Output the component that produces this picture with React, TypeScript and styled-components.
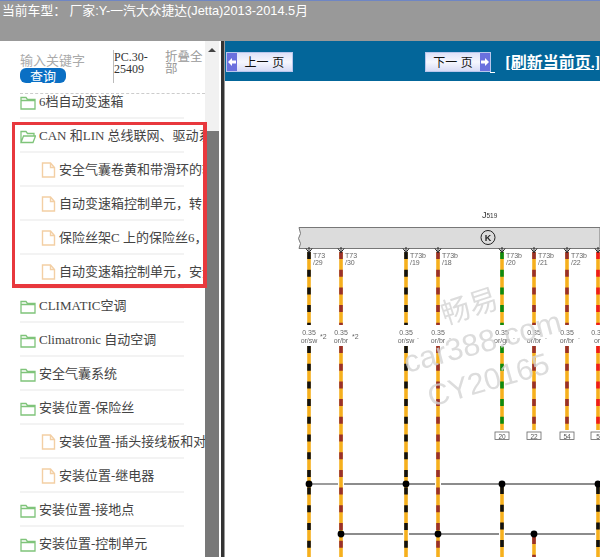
import React from 'react';
import styled, { createGlobalStyle } from 'styled-components';

const GlobalStyle = createGlobalStyle`
  html, body {
    margin: 0;
    padding: 0;
    background: #fff;
    overflow: hidden;
  }
  *, *::before, *::after {
    box-sizing: border-box;
  }
`;

const Page = styled.div`
  width: 600px;
  height: 557px;
  display: flex;
  flex-direction: column;
  overflow: hidden;
  font-family: "Liberation Serif", "Noto Sans CJK SC", serif;
`;

const TopBar = styled.div`
  height: 41px;
  flex: none;
  background: #999;
  border-top: 1px solid #6f86c4;
  padding: 1px 0 0 2px;
  color: #fff;
  font-family: "Liberation Sans", "Noto Sans CJK SC", sans-serif;
  font-size: 12.8px;
  line-height: 17px;
  white-space: nowrap;
`;

const Body = styled.div`
  flex: 1;
  display: flex;
  min-height: 0;
`;

const Sidebar = styled.div`
  width: 205px;
  flex: none;
  position: relative;
  z-index: 1;
  background: #fff;
`;

const SearchBox = styled.div`
  height: 53px;
  margin: 0 0 -9px 20px;
  display: flex;
  border-bottom: 1px dashed #ccc;
  padding-top: 9px;
`;

const SearchField = styled.div`
  width: 93px;
  display: flex;
  flex-direction: column;
  align-items: flex-start;
`;

const Placeholder = styled.div`
  font-family: "Noto Sans CJK SC", sans-serif;
  font-size: 13px;
  line-height: 15px;
  margin: 2px 0 1px;
  color: #aaa;
`;

const SearchButton = styled.div`
  width: 46px;
  height: 15px;
  background: #0a6fc4;
  border-radius: 6px;
  color: #fff;
  font-family: "Noto Sans CJK SC", sans-serif;
  font-size: 13px;
  line-height: 15px;
  text-align: center;
`;

const CodeLabel = styled.div`
  width: 52px;
  height: 33px;
  padding: 1px 14px 0 0;
  border-left: 1px solid #bbb;
  color: #333;
  font-size: 12px;
  line-height: 12px;
  word-break: break-all;
`;

const CollapseLabel = styled.div`
  width: 38px;
  font-family: "Noto Sans CJK SC", sans-serif;
  font-size: 12.5px;
  line-height: 12px;
  color: #999;
`;

const TreeGroup = styled.div<{ $marked?: boolean }>`
  position: relative;
  ${p => p.$marked && `
    &::after {
      content: '';
      position: absolute;
      left: 12px;
      top: 3px;
      width: 195px;
      height: 166px;
      border: 3px solid #e8383d;
      border-right-width: 4px;
      border-bottom-width: 4px;
    }
  `}
`;

const TreeRow = styled.div<{ $file?: boolean }>`
  height: 34px;
  margin-left: 20px;
  width: 185px;
  padding-left: ${p => (p.$file ? '21px' : '0')};
  display: flex;
  align-items: center;
  gap: 3px;
  overflow: hidden;
  background: linear-gradient(#f3f3f3, #f3f3f3) left bottom / 164px 2px no-repeat;
  white-space: nowrap;
  svg {
    flex: none;
  }
`;

const TreeText = styled.span`
  font-family: "Liberation Serif", "Noto Sans CJK SC", serif;
  font-size: 13px;
  line-height: 16px;
  color: #444;
`;

const ScrollBar = styled.div`
  width: 14px;
  flex: none;
  display: flex;
  flex-direction: column;
  background: #f1f1f1;
`;

const ScrollTrack = styled.div`
  height: 90px;
  flex: none;
  display: flex;
  justify-content: center;
  padding-top: 7px;
`;

const ScrollArrow = styled.div`
  width: 0;
  height: 0;
  border-left: 4px solid transparent;
  border-right: 4px solid transparent;
  border-bottom: 4px solid #444;
`;

const ScrollThumb = styled.div`
  flex: 1;
  background: #787878;
`;

const Splitter = styled.div`
  width: 6px;
  flex: none;
  background: #fff;
  display: flex;
  justify-content: flex-end;
`;

const SplitLine = styled.div`
  width: 4px;
  background: #333;
  border-right: 1px solid #999;
`;

const Main = styled.div`
  flex: 1;
  min-width: 0;
  display: flex;
  flex-direction: column;
  overflow: hidden;
`;

const PageBar = styled.div`
  height: 40px;
  flex: none;
  background: #03669a;
  display: flex;
  align-items: center;
  padding: 0 0 0 1px;
  white-space: nowrap;
`;

const PageButton = styled.div<{ $next?: boolean }>`
  position: relative;
  width: 68px;
  height: 20px;
  margin-top: 1px;
  margin-left: ${p => (p.$next ? '132px' : '0')};
  display: flex;
  flex-direction: ${p => (p.$next ? 'row-reverse' : 'row')};
  border: 1px solid #b9c6ec;
  background: linear-gradient(#dfe2f9, #f6f7fe 50%, #d8dcf6);
  font-family: "Noto Sans CJK SC", sans-serif;
  font-size: 12px;
  line-height: 17px;
  color: #111;
  ${p => p.$next && `
    &::after {
      content: '';
      position: absolute;
      left: 100%;
      bottom: -2px;
      width: 5px;
      height: 1px;
      background: #fff;
    }
  `}
`;

const PageArrow = styled.div`
  width: 10px;
  flex: none;
  background: #6a70de;
  display: flex;
  align-items: center;
  justify-content: center;
`;

const PageLabel = styled.div`
  flex: 1;
  text-align: center;
  word-spacing: 1px;
`;

const RefreshLink = styled.a`
  margin-left: 14px;
  color: #fff;
  font-family: "Liberation Serif", "Noto Sans CJK SC", serif;
  font-size: 16px;
  font-weight: 700;
  text-decoration: underline;
`;

const Diagram = styled.svg`
  display: block;
  flex: 1;
  width: 375px;
  background: #fff;
  filter: blur(0.35px);
`;

const FolderIcon = ({ open }: { open?: boolean }) => (
  <svg width="16" height="15" viewBox="0 0 16 15" fill="#fff" stroke="#7fc47a" strokeWidth="1.3">
    {open ? (
      <path d="M1 13.5V2.5h5l1.5 2H14v2.5M1 13.5L3.5 7H15.5L13 13.5z" />
    ) : (
      <path d="M1 2.5h5l1.5 2h7.5v9.5H1zM1 5.5h14" />
    )}
  </svg>
);

const FileIcon = () => (
  <svg width="15" height="16" viewBox="0 0 15 16" fill="#fff" stroke="#f3cfa4" strokeWidth="1.4">
    <path d="M1.5 1h8l4 4.5v9.5h-12zM9.5 1v4.5h4" />
  </svg>
);

const firstRows = [{ label: '6档自动变速箱' }];

const markedRows = [
  { label: 'CAN 和LIN 总线联网、驱动系统', open: true },
  { label: '安全气囊卷黄和带滑环的转向柱', file: true },
  { label: '自动变速箱控制单元，转向柱', file: true },
  { label: '保险丝架C 上的保险丝6，安全', file: true },
  { label: '自动变速箱控制单元，安全气囊', file: true },
];

const restRows = [
  { label: 'CLIMATIC空调' },
  { label: 'Climatronic 自动空调' },
  { label: '安全气囊系统' },
  { label: '安装位置-保险丝' },
  { label: '安装位置-插头接线板和对', file: true },
  { label: '安装位置-继电器', file: true },
  { label: '安装位置-接地点' },
  { label: '安装位置-控制单元' },
];

type Row = { label: string; file?: boolean; open?: boolean };

const renderRow = (row: Row) => (
  <TreeRow key={row.label} $file={row.file}>
    {row.file ? <FileIcon /> : <FolderIcon open={row.open} />}
    <TreeText>{row.label}</TreeText>
  </TreeRow>
);

// diagram coordinates are page x minus 225, page y minus 81
const wires = [
  { x: 84, color: '#111', label: ['T73', '/29'], code: 'or/sw', note: '*2', to: 476 },
  { x: 116, color: '#98302c', label: ['T73', '/30'], code: 'or/br', note: '*2', to: 476 },
  { x: 181, color: '#111', label: ['T73b', '/19'], code: 'or/sw', note: '.', to: 476 },
  { x: 213, color: '#98302c', label: ['T73b', '/18'], code: 'or/br', note: '.', to: 476 },
  { x: 277, color: '#0d8a12', label: ['T73b', '/20'], code: 'or/gn', note: '.', to: 349, pin: '20' },
  { x: 309, color: '#98302c', label: ['T73b', '/21'], code: 'or/br', note: '.', to: 349, pin: '22' },
  { x: 342, color: '#98302c', label: ['T73b', '/22'], code: 'or/br', note: '.', to: 349, pin: '54' },
  { x: 373, color: '#ee1c1c', label: ['T73b', ''], code: 'or/', note: '', to: 349, pin: '5' },
];

// lower wires that only start at a splice
const spliceWires = [
  { x: 277, from: 406, color: '#111' },
  { x: 373, from: 406, color: '#111' },
  { x: 309, from: 456, color: '#98302c' },
];

const WireLine = ({ x, y1, y2, color }: { x: number; y1: number; y2: number; color: string }) => (
  <g strokeWidth="3.6">
    <line x1={x} x2={x} y1={y1} y2={y2} stroke="#f6b01d" />
    <line x1={x} x2={x} y1={y1} y2={y2} stroke={color} strokeDasharray="7 10.7" />
  </g>
);

export default function App() {
  return (
    <Page>
      <GlobalStyle />
      <TopBar>当前车型： 厂家:Y-一汽大众捷达(Jetta)2013-2014.5月</TopBar>
      <Body>
        <Sidebar>
          <SearchBox>
            <SearchField>
              <Placeholder>输入关键字</Placeholder>
              <SearchButton>查询</SearchButton>
            </SearchField>
            <CodeLabel>PC.30-25409</CodeLabel>
            <CollapseLabel>折叠全部</CollapseLabel>
          </SearchBox>
          {firstRows.map(renderRow)}
          <TreeGroup $marked>{markedRows.map(renderRow)}</TreeGroup>
          {restRows.map(renderRow)}
        </Sidebar>
        <ScrollBar>
          <ScrollTrack>
            <ScrollArrow />
          </ScrollTrack>
          <ScrollThumb />
        </ScrollBar>
        <Splitter>
          <SplitLine />
        </Splitter>
        <Main>
          <PageBar>
            <PageButton>
              <PageArrow>
                <svg width="8" height="8" viewBox="0 0 8 8" fill="#fff"><path d="M0 4l4-4v2.5h4v3H4V8z" /></svg>
              </PageArrow>
              <PageLabel>上一 页</PageLabel>
            </PageButton>
            <PageButton $next>
              <PageArrow>
                <svg width="8" height="8" viewBox="0 0 8 8" fill="#fff"><path d="M8 4L4 0v2.5H0v3h4V8z" /></svg>
              </PageArrow>
              <PageLabel>下一 页</PageLabel>
            </PageButton>
            <RefreshLink>[刷新当前页.]</RefreshLink>
          </PageBar>
          <Diagram viewBox="0 0 375 476">
            <text x="257" y="137" fontFamily="Liberation Sans" fontSize="9" fill="#333">J<tspan fontSize="6.5">519</tspan></text>
            <path d="M74 146.5H375V167.5H74l1.5-5-2-5 2-5z" fill="#dcdcdc" stroke="#777" strokeWidth="1" />
            <circle cx="263" cy="156.5" r="7" fill="none" stroke="#222" strokeWidth="1" />
            <text x="263" y="160" textAnchor="middle" fontFamily="Liberation Sans" fontSize="9" fontWeight="700" fill="#222">K</text>

            {wires.map(w => (
              <g key={w.x}>
                <WireLine x={w.x} y1={171} y2={244} color={w.color} />
                <WireLine x={w.x} y1={265} y2={w.to} color={w.color} />
                <path d={`M${w.x - 3} 167.5l3 4 3-4M${w.x} 166v6`} fill="none" stroke="#222" strokeWidth="1" />
                <text fontFamily="Liberation Sans" fontSize="7" fill="#666">
                  <tspan x={w.x + 4} y="177">{w.label[0]}</tspan>
                  <tspan x={w.x + 4} y="184">{w.label[1]}</tspan>
                </text>
                <text fontFamily="Liberation Sans" fontSize="7" fill="#666" textAnchor="middle">
                  <tspan x={w.x} y="254">0.35</tspan>
                  <tspan x={w.x} y="262">{w.code}</tspan>
                </text>
                <text x={w.x + 11} y="258" fontFamily="Liberation Sans" fontSize="7" fill="#666">{w.note}</text>
                {w.pin && (
                  <g>
                    <rect x={w.x - 7} y="351" width="14" height="7.5" fill="#fff" stroke="#666" strokeWidth="0.8" />
                    <text x={w.x} y="358" textAnchor="middle" fontFamily="Liberation Sans" fontSize="6.5" fill="#555">{w.pin}</text>
                  </g>
                )}
              </g>
            ))}
            {spliceWires.map(w => (
              <WireLine key={w.x} x={w.x} y1={w.from} y2={476} color={w.color} />
            ))}

            <g stroke="#666" strokeWidth="1.3">
              <line x1="84" x2="113" y1="403" y2="403" />
              <line x1="119" x2="210" y1="403" y2="403" />
              <line x1="216" x2="375" y1="403" y2="403" />
              <line x1="116" x2="178" y1="453" y2="453" />
              <line x1="184" x2="274" y1="453" y2="453" />
              <line x1="280" x2="370" y1="453" y2="453" />
            </g>
            {[84, 181, 277, 373].map(x => (
              <circle key={x} cx={x} cy="403" r="3.4" fill="#000" />
            ))}
            {[116, 213, 309].map(x => (
              <circle key={x} cx={x} cy="453" r="3.4" fill="#000" />
            ))}

            <g fill="#d4d4d4" opacity="0.8" fontFamily="Liberation Sans, Noto Sans CJK SC, sans-serif">
              <text x="220" y="244" fontSize="29" transform="rotate(-18 220 244)" fontFamily="Noto Sans CJK SC">畅易</text>
              <text x="182" y="292" fontSize="31" transform="rotate(-15 182 292)">car388.com</text>
              <text x="206" y="326" fontSize="30" transform="rotate(-16 206 326)">CY20165</text>
            </g>
          </Diagram>
        </Main>
      </Body>
    </Page>
  );
}
